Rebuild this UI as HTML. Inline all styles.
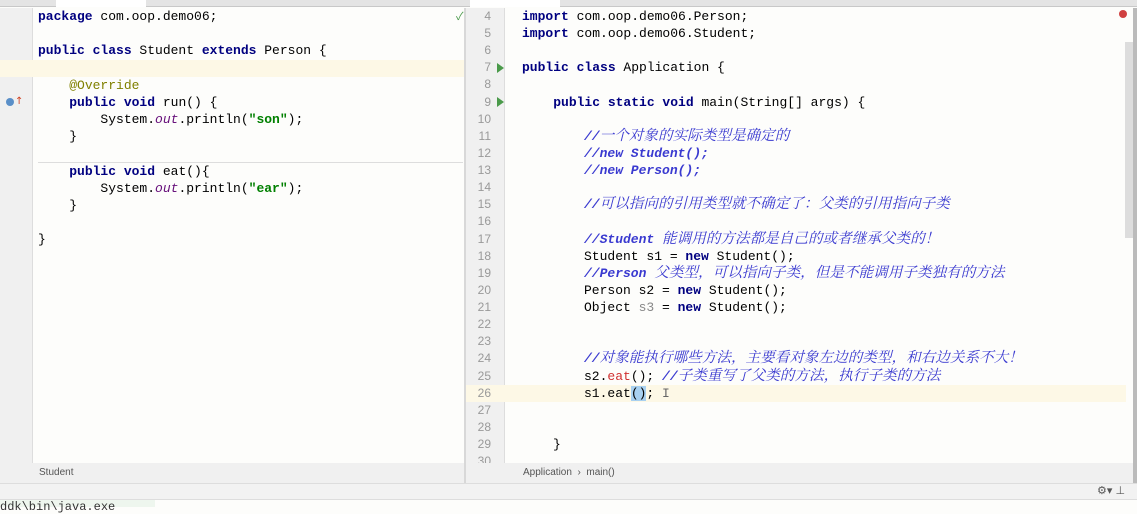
<!DOCTYPE html>
<html><head><meta charset="utf-8"><style>
*{margin:0;padding:0;box-sizing:border-box}
body{width:1137px;height:507px;overflow:hidden;background:#fdfdfb;position:relative;font-family:"Liberation Mono","Noto Sans CJK SC",monospace;font-size:13px;color:#000}
.a{position:absolute}
.l{position:absolute;height:17px;line-height:17px;white-space:pre}
.k{color:#000080;font-weight:bold}
.c{color:#3a3ad0;font-style:italic;font-weight:bold}
.cz{font-family:"Noto Serif CJK SC",serif;font-weight:normal;font-size:14.6px;line-height:0}
.s{color:#008000;font-weight:bold}
.o{color:#660e7a;font-style:italic}
.an{color:#808000}
.n{position:absolute;left:466px;width:25px;text-align:right;color:#999;height:17px;line-height:17px;font-size:12px;font-family:"Liberation Sans",sans-serif}
.ui{font-family:"Liberation Sans",sans-serif;font-size:10px;color:#555}
</style></head><body>
<div class="a" style="left:0;top:0;width:1137px;height:7px;background:#e4e4e4;border-bottom:1px solid #c8c8c8"></div>
<div class="a" style="left:56px;top:0;width:90px;height:7px;background:#fff"></div>
<div class="a" style="left:470px;top:0;width:90px;height:7px;background:#fff"></div>
<div class="a" style="left:0;top:8px;width:33px;height:455px;background:#f0f0f0;border-right:1px solid #ddd"></div>
<div class="a" style="left:0;top:60px;width:465px;height:17px;background:#fdf8e6"></div>
<div class="a" style="left:38px;top:162px;width:425px;height:1px;background:#ddd"></div>
<div class="a" style="left:6px;top:98px;width:8px;height:8px;border-radius:50%;background:#5a8fc8"></div>
<div class="a" style="left:15px;top:96px;color:#d04020;font-size:10px;font-family:'DejaVu Sans'">↑</div>
<div class="a" style="left:456px;top:8px;color:#4a9a4a;font-size:11px">✓</div>
<div class="l" style="left:38px;top:8px"><span class="k">package</span> com.oop.demo06;</div>
<div class="l" style="left:38px;top:42px"><span class="k">public class</span> Student <span class="k">extends</span> Person {</div>
<div class="l" style="left:38px;top:77px">    <span class="an">@Override</span></div>
<div class="l" style="left:38px;top:94px">    <span class="k">public void</span> run() {</div>
<div class="l" style="left:38px;top:111px">        System.<span class="o">out</span>.println(<span class="s">"son"</span>);</div>
<div class="l" style="left:38px;top:128px">    }</div>
<div class="l" style="left:38px;top:163px">    <span class="k">public void</span> eat(){</div>
<div class="l" style="left:38px;top:180px">        System.<span class="o">out</span>.println(<span class="s">"ear"</span>);</div>
<div class="l" style="left:38px;top:197px">    }</div>
<div class="l" style="left:38px;top:231px">}</div>
<div class="a" style="left:464px;top:8px;width:2px;height:475px;background:#d8d8d8"></div>
<div class="a" style="left:466px;top:8px;width:39px;height:455px;background:#f0f0f0;border-right:1px solid #ddd"></div>
<div class="a" style="left:466px;top:385px;width:660px;height:17px;background:#fdf8e6"></div>
<div class="a" style="left:497px;top:63px;width:0;height:0;border-left:7px solid #4a9a4a;border-top:5px solid transparent;border-bottom:5px solid transparent"></div>
<div class="a" style="left:497px;top:97px;width:0;height:0;border-left:7px solid #4a9a4a;border-top:5px solid transparent;border-bottom:5px solid transparent"></div>
<div class="n" style="top:8px">4</div><div class="n" style="top:25px">5</div><div class="n" style="top:42px">6</div><div class="n" style="top:59px">7</div><div class="n" style="top:76px">8</div><div class="n" style="top:94px">9</div><div class="n" style="top:111px">10</div><div class="n" style="top:128px">11</div><div class="n" style="top:145px">12</div><div class="n" style="top:162px">13</div><div class="n" style="top:179px">14</div><div class="n" style="top:196px">15</div><div class="n" style="top:213px">16</div><div class="n" style="top:231px">17</div><div class="n" style="top:248px">18</div><div class="n" style="top:265px">19</div><div class="n" style="top:282px">20</div><div class="n" style="top:299px">21</div><div class="n" style="top:316px">22</div><div class="n" style="top:333px">23</div><div class="n" style="top:350px">24</div><div class="n" style="top:368px">25</div><div class="n" style="top:385px">26</div><div class="n" style="top:402px">27</div><div class="n" style="top:419px">28</div><div class="n" style="top:436px">29</div><div class="n" style="top:453px">30</div>
<div class="l" style="left:522px;top:8px"><span class="k">import</span> com.oop.demo06.Person;</div>
<div class="l" style="left:522px;top:25px"><span class="k">import</span> com.oop.demo06.Student;</div>
<div class="l" style="left:522px;top:59px"><span class="k">public class</span> Application {</div>
<div class="l" style="left:522px;top:94px">    <span class="k">public static void</span> main(String[] args) {</div>
<div class="l c" style="left:584px;top:128px">//<span class="cz">一个对象的实际类型是确定的</span></div>
<div class="l c" style="left:584px;top:145px">//new Student();</div>
<div class="l c" style="left:584px;top:162px">//new Person();</div>
<div class="l c" style="left:584px;top:196px">//<span class="cz">可以指向的引用类型就不确定了：父类的引用指向子类</span></div>
<div class="l c" style="left:584px;top:231px">//Student <span class="cz">能调用的方法都是自己的或者继承父类的！</span></div>
<div class="l" style="left:584px;top:248px">Student s1 = <span class="k">new</span> Student();</div>
<div class="l c" style="left:584px;top:265px">//Person <span class="cz">父类型，可以指向子类，但是不能调用子类独有的方法</span></div>
<div class="l" style="left:584px;top:282px">Person s2 = <span class="k">new</span> Student();</div>
<div class="l" style="left:584px;top:299px">Object <span style="color:#888">s3</span> = <span class="k">new</span> Student();</div>
<div class="l c" style="left:584px;top:350px">//<span class="cz">对象能执行哪些方法，主要看对象左边的类型，和右边关系不大！</span></div>
<div class="l" style="left:584px;top:368px">s2.<span style="color:#d03030">eat</span>(); <span class="c">//<span class="cz">子类重写了父类的方法，执行子类的方法</span></span></div>
<div class="l" style="left:584px;top:385px">s1.eat<span style="background:#a8d0f0">()</span>; <span style="color:#666">I</span></div>
<div class="l" style="left:553px;top:436px">}</div>
<div class="a" style="left:1119px;top:10px;width:8px;height:8px;border-radius:50%;background:#d04040"></div>
<div class="a" style="left:1125px;top:42px;width:8px;height:196px;background:#ddd"></div>
<div class="a" style="left:1133px;top:8px;width:4px;height:475px;background:#bbb"></div>
<div class="a ui" style="left:0;top:463px;width:464px;height:20px;background:#f0f0f0;line-height:20px;padding-left:39px">Student</div>
<div class="a ui" style="left:466px;top:463px;width:667px;height:20px;background:#f0f0f0;line-height:20px;padding-left:57px">Application &nbsp;›&nbsp; main()</div>
<div class="a" style="left:0;top:483px;width:1137px;height:17px;background:#f2f2f2;border-top:1px solid #ddd;border-bottom:1px solid #ddd"></div>
<div class="a ui" style="left:1097px;top:484px;font-size:11px">⚙▾ ⊥</div>
<div class="a" style="left:0;top:500px;width:155px;height:7px;background:#eef6ee"></div>
<div class="a" style="left:0;top:500px;font-size:12px;color:#333;line-height:14px">ddk\bin\java.exe</div>
</body></html>
